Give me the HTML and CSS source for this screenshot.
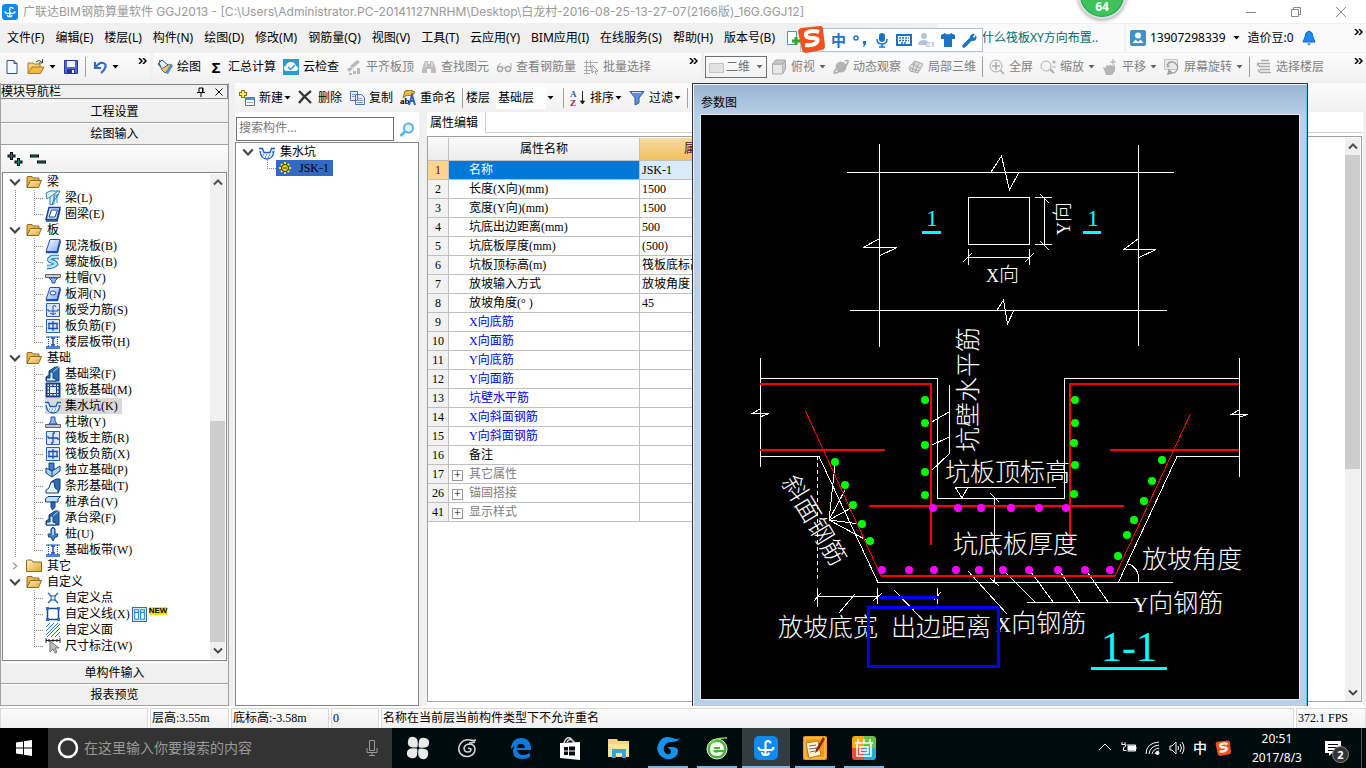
FILE: index.html
```html
<!DOCTYPE html>
<html lang="zh-CN">
<head>
  <meta charset="UTF-8" />
  <meta name="viewport" content="width=device-width, initial-scale=1.0" />
  <title>广联达BIM钢筋算量软件 GGJ2013</title>
  <link rel="stylesheet" href="styles.css">
</head>
<body>
  <svg class="defs" aria-hidden="true">
    <defs>
      <linearGradient id="gold" x1="0" y1="0" x2="1" y2="1"><stop offset="0" stop-color="#fff3c0"/><stop offset="1" stop-color="#dfa52c"/></linearGradient>
      <linearGradient id="sky" x1="0" y1="0" x2="1" y2="1"><stop offset="0" stop-color="#fff"/><stop offset="1" stop-color="#7fa8ee"/></linearGradient>
      <symbol id="logo" viewBox="0 0 24 24"><rect width="24" height="24" rx="5" fill="#0d8bf2"/><path d="M11.500 19V7.500q0-2.500 2.500-2.500t2.500 2.500M4.500 11q0 3 3 3h9q3 0 3-3M8 16q0 3 3.500 3t3.500-2.500" fill="none" stroke="#fff" stroke-width="2"/></symbol>
      <symbol id="down" viewBox="0 0 7 4"><path d="M0.500 0h6L3.500 3.500z" fill="currentColor"/></symbol>
      <symbol id="more" viewBox="0 0 9 6"><path d="M1 0l3 3-3 3M5 0l3 3-3 3" fill="none" stroke="#000" stroke-width="1.500"/></symbol>
      <symbol id="open" viewBox="0 0 10 6"><path d="M1 1l4 4 4-4" fill="none" stroke="#444" stroke-width="1.800"/></symbol>
      <symbol id="closed" viewBox="0 0 6 10"><path d="M1 1l4 4-4 4" fill="none" stroke="#a0a0a0" stroke-width="1.800"/></symbol>
      <symbol id="up" viewBox="0 0 10 6"><path d="M1 5l4-4 4 4" fill="none" stroke="#505050" stroke-width="2"/></symbol>

      <symbol id="new" viewBox="0 0 16 16"><path d="M3 1.500h7l3 3v10H3z" fill="#f4f8ff" stroke="#36506e"/><path d="M10 1.500v3h3" fill="none" stroke="#36506e"/></symbol>
      <symbol id="openfile" viewBox="0 0 18 16"><path d="M1 14V4h5l1 1h6v3" fill="#f5d27a" stroke="#a77b20"/><path d="M1 14.500L5 8h12l-3.500 6.500z" fill="#f0b94a" stroke="#a77b20"/><path d="M9 3q3-3 6 0M15.500 0v4h-4" fill="none" stroke="#444"/></symbol>
      <symbol id="save" viewBox="0 0 16 16"><path d="M1.500 1.500h13v13h-13z" fill="#5367d3" stroke="#27369a"/><path d="M4 2h8v6H4z" fill="#eef2ff"/><path d="M4 10h8v4H4z" fill="#273596"/><path d="M9 11h2v3H9z" fill="#fff"/></symbol>
      <symbol id="undo" viewBox="0 0 16 16"><path d="M3 3v6h6M4 8q3-5 7-4t2 5q-1 3-4 5" fill="none" stroke="#2f6bc9" stroke-width="2.200"/></symbol>
      <symbol id="draw" viewBox="0 0 16 16"><path d="M1 5l4-4 6 5-5 5z" fill="#e3edf8" stroke="#35506f"/><path d="M3 1q-2 4 1 7" stroke="#35506f" fill="none"/><path d="M4 10l4 4 7-6-2-3z" fill="#f3c94d" stroke="#6a6a6a"/><path d="M8 14l6-9 2 1-5 9z" fill="#4a8ae0"/></symbol>
      <symbol id="cloud" viewBox="0 0 16 16"><path d="M0 0h16v16H0z" fill="#2a9bd8"/><path d="M4 12q-3 0-3-3 0-2 2-2.500Q4 3 8 3t5 4q2 0 2 2.500T12.500 12z" fill="#fff"/><path d="M5 8l2.500 2.500L12 6" fill="none" stroke="#2a9bd8" stroke-width="1.500"/></symbol>
      <symbol id="align" viewBox="0 0 16 16"><path d="M4 7l7-6 3 2-7 6zM1 10l4-2 2 2-4 3zM3 14h3v2H3zM7 12h3v3H7zM11 9h3v6h-3z" fill="#b9b9b9"/></symbol>
      <symbol id="find" viewBox="0 0 16 16"><path d="M4 2h3v3h2V2h3l3 8v4h-5v-4H6v4H1v-4z" fill="#bdbdbd"/><path d="M5 3v5M11 3v5" stroke="#eee"/></symbol>
      <symbol id="glasses" viewBox="0 0 16 16"><path d="M5 4Q1 6 1.500 10M15 4v6" fill="none" stroke="#aaa"/><circle cx="4" cy="10" r="2.500" fill="none" stroke="#aaa" stroke-width="1.500"/><circle cx="12" cy="10" r="2.500" fill="none" stroke="#aaa" stroke-width="1.500"/><path d="M6 9h3" stroke="#aaa"/></symbol>
      <symbol id="batch" viewBox="0 0 16 16"><path d="M1 3.500h14M1 7.500h8M1 11.500h8M1 14.500h6M3.500 1v14M7.500 1v8" stroke="#aaa" fill="none"/><path d="M9 6l6 6-3 .5 1.500 3M9 6v8l2-2" stroke="#999" fill="#eee"/></symbol>
      <symbol id="plane" viewBox="0 0 16 16"><path d="M.5 4.500h14v9H.5z" fill="#e2e2e2" stroke="#c5c5c5"/></symbol>
      <symbol id="cube" viewBox="0 0 16 16"><path d="M1.500 5h10v10h-10z" fill="#e8e8e8" stroke="#aaa"/><path d="M1.500 5l3-4h10l-3 4zM11.500 5l3-4v9l-3 5" fill="#c9c9c9" stroke="#aaa"/></symbol>
      <symbol id="orbit" viewBox="0 0 16 16"><circle cx="8" cy="8" r="5.500" fill="#b5b5b5"/><path d="M3 10Q-1 15 3 14 12 10 14 5q3-5-2-3" fill="none" stroke="#aaa" stroke-width="1.500"/></symbol>
      <symbol id="part" viewBox="0 0 16 16"><path d="M1 8l6-6 8 3-5 9-8-2z" fill="#ddd" stroke="#aaa"/><path d="M4 5l8 4M7 3L4 12M11 4L7 13M2 9l9 3" stroke="#aaa"/></symbol>
      <symbol id="full" viewBox="0 0 16 16"><circle cx="7" cy="7" r="6" fill="#f4f4f4" stroke="#aaa"/><path d="M7 3v8M3 7h8M11 11l4 4" stroke="#aaa" stroke-width="1.500"/></symbol>
      <symbol id="zoom" viewBox="0 0 16 16"><circle cx="6" cy="7" r="5" fill="#f4f4f4" stroke="#b0b0b0"/><path d="M10 10l4 4" stroke="#aaa" stroke-width="2"/><path d="M12 3h4M14 1v4M12 8h4" stroke="#aaa"/></symbol>
      <symbol id="pan" viewBox="0 0 16 16"><path d="M1 8l3 1V6l2 1 2-1 2 1 3-1v6l-3 4H4z" fill="#b5b5b5"/><path d="M11 0v6M8 3h6" stroke="#aaa"/></symbol>
      <symbol id="rotate" viewBox="0 0 16 16"><path d="M.5.500h13v10H.5z" fill="#e9e9e9" stroke="#c4c4c4"/><path d="M3 6q3-5 8-2 4 3 2 7t-8 3M4 15l1-4 3 3z" fill="none" stroke="#999" stroke-width="1.300"/><circle cx="4" cy="7" r="1.500" fill="#aaa"/></symbol>
      <symbol id="floors" viewBox="0 0 16 16"><path d="M5 1.500h8M1 4.500h13M4 7.500h10M1 5l3 3M4 10.500h10M4 13.500h11M2 10.500l2 3" fill="none" stroke="#aaa" stroke-width="1.500"/></symbol>

      <symbol id="add" viewBox="0 0 16 16"><path d="M4 0v8M0 4h8" stroke="#8b7500" stroke-width="4"/><path d="M4 1v6M1 4h6" stroke="#ffe66b" stroke-width="2"/><path d="M6.500 7.500h9v8h-9z" fill="#fff" stroke="#4a78bf"/><path d="M7 8h8v2H7z" fill="#5b8edb"/><path d="M8 12.500h6" stroke="#9ab"/></symbol>
      <symbol id="del" viewBox="0 0 16 16"><path d="M1 1q6 6 12 12M13 1Q6 6 1 13" fill="none" stroke="#333" stroke-width="2.200"/></symbol>
      <symbol id="copy" viewBox="0 0 16 16"><path d="M1.500 1.500h7v9h-7zM6.500 4.500h6l3 3v7h-9z" fill="#e8f0fc" stroke="#4773b7"/><path d="M8 8.500h5M8 10.500h6M8 12.500h6M3 4.500h4M3 6.500h3" stroke="#7b9bd0"/></symbol>
      <symbol id="rename" viewBox="0 0 16 16"><path d="M5 1l5-1 5 2-3 4-5-1-4 3z" fill="#f0bd36" stroke="#8d6c1c"/><text x="0" y="14" class="icon-ab">ab</text><path d="M9 15l3-10 3 10M10 11h4" fill="none" stroke="#2f63b8" stroke-width="2"/></symbol>
      <symbol id="sort" viewBox="0 0 16 16"><text x="0" y="7" class="icon-a">A</text><text x="0" y="16" class="icon-z">Z</text><path d="M12.500 1v13M10.500 11l2 3 2-3z" stroke="#222" fill="#222"/></symbol>
      <symbol id="filter" viewBox="0 0 16 16"><path d="M1 1.500h14L10 8v5l-4 2V8z" fill="#5d91dc" stroke="#2e5fae"/><path d="M3 2.500h9" stroke="#cfe0fa"/></symbol>
      <symbol id="search" viewBox="0 0 16 16"><circle cx="9.500" cy="6" r="4.500" fill="#e6f5fd" stroke="#5cb2e6" stroke-width="2"/><path d="M6 9.500L1.500 14" stroke="#5cb2e6" stroke-width="3"/></symbol>

      <symbol id="folder" viewBox="0 0 16 16"><path d="M1 13.500V3.500q0-1 1-1h4l1.500 1.500H13v3" fill="#e9b64c" stroke="#8d6a1d"/><path d="M1 13.500L4.500 6.500h11l-3 7z" fill="url(#gold)" stroke="#8d6a1d"/></symbol>
      <symbol id="folder-shut" viewBox="0 0 16 16"><path d="M.5 13.500V3q0-1 1-1h4L7 4h8.500v9.500z" fill="url(#gold)" stroke="#8d6a1d"/></symbol>
      <symbol id="beam" viewBox="0 0 16 16"><path d="M1 3l4-2h10l-2 4H9v9l-4 1V7L2 9z" fill="#d9f2fb" stroke="#2a7ec4"/><path d="M5 7l8-6M7 15l3-9M9 11l4-6M12 5v8" stroke="#2a7ec4"/></symbol>
      <symbol id="ring" viewBox="0 0 16 16"><path d="M4 1.500h11L12 13.500H1z" fill="#dce8ff" stroke="#16429a" stroke-width="1.500"/><path d="M6.500 4h6L10 11H4z" fill="#fff" stroke="#16429a"/><path d="M1 15h11l3-12" fill="none" stroke="#16429a" stroke-width="1.500"/></symbol>
      <symbol id="slab" viewBox="0 0 16 16"><path d="M5 1.500h10L12 13.500H1z" fill="url(#sky)" stroke="#1c4fb4"/><path d="M1 14.500h11.500l3-12" fill="none" stroke="#1c4fb4" stroke-width="1.500"/></symbol>
      <symbol id="spiral" viewBox="0 0 16 16"><path d="M14 3H7Q2 6 6 7t5 3q-2 3-9 3" fill="none" stroke="#1c78c4" stroke-width="4.500"/><path d="M14 3H7Q2 6 6 7t5 3q-2 3-9 3" fill="none" stroke="#b9e6fb" stroke-width="2.500"/></symbol>
      <symbol id="cap" viewBox="0 0 16 16"><path d="M.5 4.500h15v3H.5z" fill="#ccc" stroke="#666"/><path d="M4 8l3 3v2h3v-2l3-3z" fill="#8dbcf4" stroke="#1c4fa4"/></symbol>
      <symbol id="hole" viewBox="0 0 16 16"><path d="M5 1.500h10L12 13.500H1z" fill="url(#sky)" stroke="#1c4fb4"/><path d="M1 14.500h11.500l3-12" fill="none" stroke="#1c4fb4" stroke-width="1.500"/><ellipse cx="8" cy="7" rx="3" ry="2" fill="#fff" stroke="#1c4fb4"/></symbol>
      <symbol id="bars" viewBox="0 0 16 16"><path d="M1.500 1.500h13v13h-13z" fill="#dbe9ff" stroke="#2a5fc0"/><path d="M8 13V4q2-2 3 1M3 7v2h10V7M5 11q3 3 6 0" fill="none" stroke="#1d4fb0"/></symbol>
      <symbol id="neg" viewBox="0 0 16 16"><path d="M1.500 1.500h13v13h-13z" fill="#dbe9ff" stroke="#2a5fc0"/><path d="M8 3v10M3 5.500h10M4 5v5M12 5v5M3 10.500h10" stroke="#1d4fb0" stroke-width="1.300"/></symbol>
      <symbol id="strip" viewBox="0 0 16 16"><path d="M1 12h14v3H1z" fill="#4a83d6"/><path d="M1 3h14" stroke="#1d4fb0"/><path d="M3.500 3v9M12.500 3v9" stroke="#1d4fb0" stroke-dasharray="1 1"/><path d="M6 4h4M8 4v8M6 11h4" stroke="#1d4fb0" stroke-width="1.500"/></symbol>
      <symbol id="fbeam" viewBox="0 0 16 16"><path d="M1 15v-4l3-2V5l6-4h4v14z" fill="#2c6cb4" stroke="#123e78"/><path d="M1.500 15v-3H5V6h3v6l3 1v2z" fill="#d8ecff" stroke="#123e78"/><path d="M8 6l6-5" stroke="#9fd0ff"/></symbol>
      <symbol id="raft" viewBox="0 0 16 16"><path d="M1.500 1.500h13v13h-13z" fill="#e8f1ff" stroke="#123e88" stroke-width="2"/><path d="M4.500 4.500h7v7h-7z" fill="none" stroke="#123e88"/><path d="M4.500 1v3M8 1v3M11.500 1v3M4.500 12v3M8 12v3M11.500 12v3M1 4.500h3M1 8h3M1 11.500h3M12 4.500h3M12 8h3M12 11.500h3" stroke="#123e88"/></symbol>
      <symbol id="pit" viewBox="0 0 16 16"><path d="M0 3.500h4l1 5h6l1-5h4q-1 9-4 11H5Q1 12 0 6z" fill="#e1f0ff"/><path d="M0 4.500h3.500L5 8.500h6l1.500-4H16M1 7q1 8 7 8t7-8" fill="none" stroke="#1e5fbc" stroke-width="1.300"/><path d="M4 11h1M7 11h1M10 11h1M6 13h1M9 13h1M13 8h1" stroke="#1e5fbc"/></symbol>
      <symbol id="pier" viewBox="0 0 16 16"><path d="M.5 10.500h15v3H.5z" fill="#c4c4c4" stroke="#666"/><path d="M4 10l2-3V3h4v4l2 3z" fill="#8dbcf4" stroke="#1c4fa4"/></symbol>
      <symbol id="cross" viewBox="0 0 16 16"><path d="M1.500 1.500h13v13h-13z" fill="#dbe9ff" stroke="#2a5fc0"/><path d="M8 3v10M3 8h10M10 3H8M6 13h2M3 6v2M13 10V8" stroke="#1d4fb0" stroke-width="1.300"/></symbol>
      <symbol id="single" viewBox="0 0 16 16"><path d="M1 6l6 3 8-5v5l-8 6-6-4z" fill="#a9d2fb" stroke="#123e78"/><path d="M4 1h5v6L7 9 4 7z" fill="#3d84cc" stroke="#123e78"/><path d="M7 9v6" stroke="#123e78"/></symbol>
      <symbol id="stripf" viewBox="0 0 16 16"><path d="M6 4l5-3h4v10l-2 4z" fill="#2c6cb4" stroke="#123e78"/><path d="M1 15v-3l3-2 2-6h3l1 6 3 2v3z" fill="#e4f2ff" stroke="#123e78"/></symbol>
      <symbol id="pilecap" viewBox="0 0 16 16"><path d="M.5 5L3 2.500h12.500L13 5v3H.5z" fill="#bfe0ff" stroke="#123e78"/><path d="M6 8v5l1.500 3L10 13V8z" fill="#2c6cb4" stroke="#123e78"/></symbol>
      <symbol id="pile" viewBox="0 0 16 16"><path d="M6 3l2-2 2 2v5h3l-1 3H10l-2 4-2-4H3.500L3 8h3z" fill="#3f84cf" stroke="#123e78"/><path d="M8 3v6" stroke="#d8ecff" stroke-width="1.500"/></symbol>
      <symbol id="point" viewBox="0 0 16 16"><path d="M3 3l10 10M13 3L3 13" stroke="#1e5fbc" stroke-width="1.300"/><path d="M6 6h4v4H6z" fill="#dff" stroke="#1e5fbc"/></symbol>
      <symbol id="poly" viewBox="0 0 16 16"><path d="M2.500 2.500h11v11h-11z" fill="#fff" stroke="#1546a0" stroke-width="1.500"/><path d="M1 1h3v3H1zM12 1h3v3h-3zM1 12h3v3H1zM12 12h3v3h-3z" fill="#2c6fd0"/></symbol>
      <symbol id="hatch" viewBox="0 0 16 16"><path d="M1 5l4-4M1 9l8-8M1 13L13 1M2 15L15 2M6 15l9-9M10 15l5-5M14 15l1-1" stroke="#2c6fd0"/></symbol>
      <symbol id="dim" viewBox="0 0 16 16"><path d="M1 0v5M15 0v5M1 2.500h14M4 1v3M8 1v3M12 1v3" stroke="#222"/><path d="M5 3v11l3-3 2 4 2-1-2-4h4z" fill="#bbb" stroke="#777"/></symbol>
      <symbol id="sun" viewBox="0 0 16 16"><path d="M8 2v12M2 8h12M4 4l8 8M12 4l-8 8" stroke="#ffe600" stroke-width="2"/><circle cx="8" cy="8" r="3.500" fill="#ffe600" stroke="#222"/><path d="M6 8h4" stroke="#222"/></symbol>
      <symbol id="sogou" viewBox="0 0 28 28"><path d="M4 3l19-2q3 0 3 3l2 17q0 3-3 4L9 28q-3 0-4-3L1 7q0-3 3-4z" fill="#f4511e"/><path d="M22 7q-6-2-11 0-4 2-1 5 2 1 6 1 6 0 4 4-3 4-12 3" fill="none" stroke="#fff" stroke-width="4"/></symbol>
    </defs>
  </svg>

  <header class="titlebar">
    <svg class="app-logo"><use href="#logo"/></svg>
    <h1>广联达BIM钢筋算量软件 GGJ2013 - [C:\Users\Administrator.PC-20141127NRHM\Desktop\白龙村-2016-08-25-13-27-07(2166版)_16G.GGJ12]</h1>
    <div class="ball">64</div>
    <div class="window-buttons">
      <button aria-label="最小化"><svg viewBox="0 0 12 12"><path d="M1 6.500h10"/></svg></button>
      <button aria-label="还原"><svg viewBox="0 0 12 12"><path d="M1.500 3.500h7v7h-7zM3.500 3V1.500h7v7H9"/></svg></button>
      <button aria-label="关闭"><svg viewBox="0 0 12 12"><path d="M1 1l10 10M11 1L1 11"/></svg></button>
    </div>
  </header>

  <div class="menubar">
    <nav class="menus">
      <button>文件(F)</button><button>编辑(E)</button><button>楼层(L)</button><button>构件(N)</button><button>绘图(D)</button><button>修改(M)</button><button>钢筋量(Q)</button><button>视图(V)</button><button>工具(T)</button><button>云应用(Y)</button><button>BIM应用(I)</button><button>在线服务(S)</button><button>帮助(H)</button><button>版本号(B)</button>
      <svg class="icon" viewBox="0 0 16 16"><path d="M1.500 1.500h9v13h-9z" fill="#fff" stroke="#3f9bc9"/><path d="M6 11h8M10 7v8" stroke="#33a52b" stroke-width="3"/></svg>
    </nav>
    <a class="tip" href="#">什么筏板XY方向布置..</a>
    <div class="account">
      <svg class="user" viewBox="0 0 16 16"><rect width="16" height="16" rx="2" fill="#3d93c7"/><circle cx="8" cy="5.500" r="3" fill="#fff"/><path d="M2.500 13l3-3.500L8 12l2.500-2.500 3 3.500z" fill="#fff"/></svg>
      <button>13907298339<svg class="down"><use href="#down"/></svg></button>
      <span>造价豆:0</span>
      <svg class="bell" viewBox="0 0 14 16"><path d="M7 1q4 1 4 6l2 5H1l2-5q0-5 4-6z" fill="#1e88f0" stroke="#1565c0"/><path d="M5 13.500h4l-2 2z" fill="#1565c0"/></svg>
      <svg class="more"><use href="#more"/></svg>
    </div>
    <div class="ime">
      <svg class="ime-logo"><use href="#sogou"/></svg>
      <b>中</b>
      <svg viewBox="0 0 16 16"><circle cx="4" cy="6" r="2" fill="none" stroke="#1b73c8" stroke-width="1.500"/><path d="M11 9h3v3l-2 3h-1l1-3h-1z" fill="#1b73c8"/></svg>
      <svg viewBox="0 0 16 16"><rect x="5" y="1" width="6" height="9" rx="3" fill="#1b73c8"/><path d="M3 7q0 5 5 5t5-5M8 12v3M5 15h6" fill="none" stroke="#1b73c8" stroke-width="1.500"/></svg>
      <svg viewBox="0 0 16 16"><path d="M1 3h14v10H1z" fill="none" stroke="#1b73c8" stroke-width="2"/><path d="M3 6h10M3 8.500h10M5 11h6" stroke="#1b73c8" stroke-width="1.500" stroke-dasharray="2 1"/></svg>
      <svg viewBox="0 0 16 16"><circle cx="6" cy="4" r="3" fill="#b4c3d8"/><path d="M0 13q0-5 6-5 3 0 4 2v3z" fill="#b4c3d8"/><path d="M8 10h8v5H8z" fill="#c3cddc"/><path d="M10 11v3M12 11h2M12 11v3h2v-1.500h-2" stroke="#fff" fill="none"/></svg>
      <svg viewBox="0 0 16 16"><path d="M1 3l4-2q3 3 6 0l4 2v4h-3v8H4V7H1z" fill="#1b73c8"/></svg>
      <svg viewBox="0 0 16 16"><path d="M2 14l7-7" stroke="#1b73c8" stroke-width="3.500" stroke-linecap="round"/><path d="M14 3q2 6-4 6-4-3-1-6 2-2 4-1l-2 3 1 1z" fill="#1b73c8"/></svg>
    </div>
  </div>

  <div class="toolbar">
    <div class="group files">
      <button aria-label="新建工程"><svg class="icon"><use href="#new"/></svg></button>
      <button aria-label="打开"><svg class="icon wide"><use href="#openfile"/></svg><svg class="down"><use href="#down"/></svg></button>
      <button aria-label="保存"><svg class="icon"><use href="#save"/></svg></button>
      <i class="sep"></i>
      <button aria-label="撤销"><svg class="icon"><use href="#undo"/></svg><svg class="down"><use href="#down"/></svg></button>
      <svg class="more"><use href="#more"/></svg>
    </div>
    <div class="group edit">
      <button><svg class="icon"><use href="#draw"/></svg>绘图</button>
      <button><b class="icon sigma">Σ</b>汇总计算</button>
      <button><svg class="icon"><use href="#cloud"/></svg>云检查</button>
      <button class="off"><svg class="icon"><use href="#align"/></svg>平齐板顶</button>
      <button class="off"><svg class="icon"><use href="#find"/></svg>查找图元</button>
      <button class="off"><svg class="icon"><use href="#glasses"/></svg>查看钢筋量</button>
      <button class="off"><svg class="icon"><use href="#batch"/></svg>批量选择</button>
      <svg class="more"><use href="#more"/></svg>
    </div>
    <div class="group view">
      <label class="mode"><svg class="icon"><use href="#plane"/></svg><select aria-label="视图模式"><option>二维</option></select><svg class="down"><use href="#down"/></svg></label>
      <button class="off"><svg class="icon"><use href="#cube"/></svg>俯视<svg class="down"><use href="#down"/></svg></button>
      <button class="off"><svg class="icon"><use href="#orbit"/></svg>动态观察</button>
      <button class="off"><svg class="icon"><use href="#part"/></svg>局部三维</button>
      <i class="sep"></i>
      <button class="off"><svg class="icon"><use href="#full"/></svg>全屏</button>
      <button class="off"><svg class="icon"><use href="#zoom"/></svg>缩放<svg class="down"><use href="#down"/></svg></button>
      <button class="off"><svg class="icon"><use href="#pan"/></svg>平移<svg class="down"><use href="#down"/></svg></button>
      <button class="off"><svg class="icon"><use href="#rotate"/></svg>屏幕旋转<svg class="down"><use href="#down"/></svg></button>
      <i class="sep"></i>
      <button class="off"><svg class="icon"><use href="#floors"/></svg>选择楼层</button>
      <svg class="more"><use href="#more"/></svg>
    </div>
  </div>

  <main class="workspace">
    <aside class="nav">
      <div class="nav-title">
        <h2>模块导航栏</h2>
        <button aria-label="固定"><svg viewBox="0 0 10 10"><path d="M3 5.500V1h4v4.500M6.500 1v4M1 5.500h8M5 6v4"/></svg></button>
        <button aria-label="关闭"><svg viewBox="0 0 10 10"><path d="M1.500 1.500l7 7M8.500 1.500l-7 7"/></svg></button>
      </div>
      <button class="bar">工程设置</button>
      <button class="bar">绘图输入</button>
      <div class="expand">
        <button aria-label="全部展开"><svg viewBox="0 0 18 16"><path d="M4.500 1v8M.5 5h8M11.500 7v8M7.500 11h8" stroke="#000" stroke-width="3"/><path d="M4.500 2v6M1.500 5h6M11.500 8v6M8.500 11h6" stroke="#0a8f86"/></svg></button>
        <button aria-label="全部折叠"><svg viewBox="0 0 18 16"><path d="M0 5h9M7 11h9" stroke="#000" stroke-width="3"/><path d="M1 5h7M8 11h7" stroke="#0a8f86"/></svg></button>
      </div>
      <div class="tree-box">
        <ul class="tree">
          <li><div class="node"><svg class="open"><use href="#open"/></svg><svg class="icon"><use href="#folder"/></svg>梁</div>
            <ul>
              <li><svg class="icon"><use href="#beam"/></svg>梁(L)</li>
              <li><svg class="icon"><use href="#ring"/></svg>圈梁(E)</li>
            </ul>
          </li>
          <li><div class="node"><svg class="open"><use href="#open"/></svg><svg class="icon"><use href="#folder"/></svg>板</div>
            <ul>
              <li><svg class="icon"><use href="#slab"/></svg>现浇板(B)</li>
              <li><svg class="icon"><use href="#spiral"/></svg>螺旋板(B)</li>
              <li><svg class="icon"><use href="#cap"/></svg>柱帽(V)</li>
              <li><svg class="icon"><use href="#hole"/></svg>板洞(N)</li>
              <li><svg class="icon"><use href="#bars"/></svg>板受力筋(S)</li>
              <li><svg class="icon"><use href="#neg"/></svg>板负筋(F)</li>
              <li><svg class="icon"><use href="#strip"/></svg>楼层板带(H)</li>
            </ul>
          </li>
          <li><div class="node"><svg class="open"><use href="#open"/></svg><svg class="icon"><use href="#folder"/></svg>基础</div>
            <ul>
              <li><svg class="icon"><use href="#fbeam"/></svg>基础梁(F)</li>
              <li><svg class="icon"><use href="#raft"/></svg>筏板基础(M)</li>
              <li><span class="current"><svg class="icon"><use href="#pit"/></svg>集水坑(K)</span></li>
              <li><svg class="icon"><use href="#pier"/></svg>柱墩(Y)</li>
              <li><svg class="icon"><use href="#cross"/></svg>筏板主筋(R)</li>
              <li><svg class="icon"><use href="#neg"/></svg>筏板负筋(X)</li>
              <li><svg class="icon"><use href="#single"/></svg>独立基础(P)</li>
              <li><svg class="icon"><use href="#stripf"/></svg>条形基础(T)</li>
              <li><svg class="icon"><use href="#pilecap"/></svg>桩承台(V)</li>
              <li><svg class="icon"><use href="#fbeam"/></svg>承台梁(F)</li>
              <li><svg class="icon"><use href="#pile"/></svg>桩(U)</li>
              <li><svg class="icon"><use href="#strip"/></svg>基础板带(W)</li>
            </ul>
          </li>
          <li><div class="node"><svg class="open"><use href="#closed"/></svg><svg class="icon"><use href="#folder-shut"/></svg>其它</div></li>
          <li><div class="node"><svg class="open"><use href="#open"/></svg><svg class="icon"><use href="#folder"/></svg>自定义</div>
            <ul>
              <li><svg class="icon"><use href="#point"/></svg>自定义点</li>
              <li><svg class="icon"><use href="#poly"/></svg>自定义线(X)<svg class="fresh" viewBox="0 0 14 14"><path d="M.5.500h13v13H.5z" fill="#d5ebfb" stroke="#3b6d95"/><path d="M2.500 2.500h3.500v9H2.500zM8 2.500h3.500v9H8zM2.500 5H6M8 5h3.500" fill="#fff" stroke="#1e88d8"/></svg><em class="new-tag">NEW</em></li>
              <li><svg class="icon"><use href="#hatch"/></svg>自定义面</li>
              <li><svg class="icon"><use href="#dim"/></svg>尺寸标注(W)</li>
            </ul>
          </li>
        </ul>
        <div class="scroll">
          <svg><use href="#up"/></svg><i class="nav-space"></i><i class="thumb"></i><svg><use href="#open"/></svg>
        </div>
      </div>
      <button class="bar">单构件输入</button>
      <button class="bar">报表预览</button>
    </aside>

    <section class="content">
      <div class="subbar">
        <button><svg class="icon"><use href="#add"/></svg>新建<svg class="down"><use href="#down"/></svg></button>
        <button><svg class="icon"><use href="#del"/></svg>删除</button>
        <button><svg class="icon"><use href="#copy"/></svg>复制</button>
        <button><svg class="icon"><use href="#rename"/></svg>重命名</button>
        <i class="sep"></i>
        <label class="floor">楼层<select><option>基础层</option></select><svg class="down"><use href="#down"/></svg></label>
        <i class="sep"></i>
        <button><svg class="icon"><use href="#sort"/></svg>排序<svg class="down"><use href="#down"/></svg></button>
        <button><svg class="icon"><use href="#filter"/></svg>过滤<svg class="down"><use href="#down"/></svg></button>
        <i class="sep"></i>
      </div>
      <div class="panes">
        <div class="components">
          <div class="find">
            <input type="text" placeholder="搜索构件..." aria-label="搜索构件">
            <button aria-label="搜索"><svg class="icon"><use href="#search"/></svg></button>
          </div>
          <ul class="component-tree">
            <li class="node"><svg class="open"><use href="#open"/></svg><svg class="icon"><use href="#pit"/></svg>集水坑</li>
            <li class="leaf"><span class="picked"><svg class="icon"><use href="#sun"/></svg>JSK-1</span></li>
          </ul>
        </div>
        <div class="properties">
          <div class="tabs"><button class="tab">属性编辑</button></div>
          <div class="sheet">
            <table>
              <thead><tr><th></th><th>属性名称</th><th class="hot">属性值</th></tr></thead>
              <tbody>
                <tr class="selected"><th>1</th><td>名称</td><td>JSK-1</td></tr>
                <tr><th>2</th><td>长度(X向)(mm)</td><td>1500</td></tr>
                <tr><th>3</th><td>宽度(Y向)(mm)</td><td>1500</td></tr>
                <tr><th>4</th><td>坑底出边距离(mm)</td><td>500</td></tr>
                <tr><th>5</th><td>坑底板厚度(mm)</td><td>(500)</td></tr>
                <tr><th>6</th><td>坑板顶标高(m)</td><td>筏板底标高</td></tr>
                <tr><th>7</th><td>放坡输入方式</td><td>放坡角度</td></tr>
                <tr><th>8</th><td>放坡角度(° )</td><td>45</td></tr>
                <tr class="rebar"><th>9</th><td>X向底筋</td><td></td></tr>
                <tr class="rebar"><th>10</th><td>X向面筋</td><td></td></tr>
                <tr class="rebar"><th>11</th><td>Y向底筋</td><td></td></tr>
                <tr class="rebar"><th>12</th><td>Y向面筋</td><td></td></tr>
                <tr class="rebar"><th>13</th><td>坑壁水平筋</td><td></td></tr>
                <tr class="rebar"><th>14</th><td>X向斜面钢筋</td><td></td></tr>
                <tr class="rebar"><th>15</th><td>Y向斜面钢筋</td><td></td></tr>
                <tr><th>16</th><td>备注</td><td></td></tr>
                <tr class="fold"><th>17</th><td><button aria-label="展开其它属性">+</button>其它属性</td><td></td></tr>
                <tr class="fold"><th>26</th><td><button aria-label="展开锚固搭接">+</button>锚固搭接</td><td></td></tr>
                <tr class="fold"><th>41</th><td><button aria-label="展开显示样式">+</button>显示样式</td><td></td></tr>
              </tbody>
            </table>
            <div class="scroll">
              <svg><use href="#up"/></svg><i class="thumb tall"></i><i class="rest"></i><svg><use href="#open"/></svg>
            </div>
          </div>
        </div>
      </div>
    </section>

    <section class="dialog">
      <h2>参数图</h2>
      <svg class="drawing" viewBox="701 115 598 584">
        <!-- plan -->
        <g class="line">
          <path d="M879.500 144V347M1138.500 145V346M847 172.500H1174M850 310.500H1167"/>
          <path d="M991 172L1001.500 156 1009.500 190 1019 172M997 310L1003.500 300 1007.500 324 1014 310"/>
          <path d="M879 239L863 247.500H897L879 256M1138 239L1124 249.500H1156L1138 258"/>
          <path d="M968.500 197.500H1029.500V244.500H968.500z"/>
          <path d="M1044.500 197V244M1035 197.500H1052M1035 244.500H1052M1040 194L1049 203M1040 241L1049 250"/>
          <path d="M968 257.500H1029M968.500 249V265M1029.500 249V265M963 262L972 253M1025 262L1034 253"/>
        </g>
        <path class="mark" d="M922 232.500H941M1083 232.500H1101M1091 668.500H1167"/>
        <text class="cyan" x="926" y="226">1</text>
        <text class="cyan" x="1087" y="226">1</text>
        <text class="small" x="986" y="282"><tspan>X</tspan>向</text>
        <text class="small" transform="translate(1070 235) rotate(-90)"><tspan>Y</tspan>向</text>

        <!-- section 1-1 -->
        <g class="line">
          <path d="M760.500 358V467M1239.500 358V477"/>
          <path d="M760 409L752 413.500H769L760 417M1239 410L1231 414.500H1248L1239 417"/>
          <path d="M760 378.500H937.500V498.500H1064.500V378.500H1239"/>
          <path d="M760 456.500H819L878 582.500H1173M1239 456.500H1177L1118.500 582"/>
          <path d="M817.500 456V580" stroke-dasharray="4 3"/>
          <path d="M949.500 385V454M949 412L930 423M949 437L930 446M949 454L930 472"/>
          <path d="M955 487.500H1056M955 487L962 498 968 487"/>
          <path d="M994.500 498V583M990 493L999 502M990 578L999 586"/>
          <path d="M829 520L835 465M829 520L845 490M829 520L853 507M829 520L860 524M829 520L868 541"/>
          <path d="M1128 564Q1139 567 1139 582"/>
          <path d="M1027 602.500H1136M1005 572L1035 602M1031 572L1053 602M1061 573L1080 602M1088 573L1108 602M968 571L1007 614"/>
          <path d="M817 596.500H878M817.500 588V607M877.500 588V604M937.500 588V604M814 601L821 593M873 601L882 593M934 600L941 592M855 594L839 613M894 590L921 618"/>
        </g>
        <path class="steel thin" d="M805.500 411L881 576M1115 576L1190.500 414"/>
        <path class="steel" d="M760 384H931V545M1239 384H1070V545M760 450H885M1110 450H1239M869 506H1124M881 576H1115"/>
        <g class="side">
          <circle cx="925" cy="400" r="4"/><circle cx="925" cy="423" r="4"/><circle cx="925" cy="445" r="4"/><circle cx="925" cy="472" r="4"/><circle cx="925" cy="495" r="4"/>
          <circle cx="1075" cy="400" r="4"/><circle cx="1075" cy="423" r="4"/><circle cx="1074" cy="443" r="4"/><circle cx="1075" cy="465" r="4"/><circle cx="1074" cy="494" r="4"/>
          <circle cx="835" cy="462" r="4"/><circle cx="845" cy="485" r="4"/><circle cx="853" cy="505" r="4"/><circle cx="862" cy="524" r="4"/><circle cx="870" cy="541" r="4"/>
          <circle cx="1162" cy="460" r="4"/><circle cx="1152" cy="481" r="4"/><circle cx="1144" cy="501" r="4"/><circle cx="1134" cy="520" r="4"/><circle cx="1127" cy="535" r="4"/><circle cx="1118" cy="556" r="4"/>
        </g>
        <g class="flat">
          <circle cx="933" cy="508" r="4"/><circle cx="958" cy="508" r="4"/><circle cx="981" cy="508" r="4"/><circle cx="1011" cy="508" r="4"/><circle cx="1039" cy="508" r="4"/><circle cx="1066" cy="508" r="4"/>
          <circle cx="882" cy="570" r="4"/><circle cx="909" cy="570" r="4"/><circle cx="934" cy="570" r="4"/><circle cx="956" cy="570" r="4"/><circle cx="979" cy="570" r="4"/><circle cx="1003" cy="570" r="4"/><circle cx="1029" cy="570" r="4"/><circle cx="1058" cy="570" r="4"/><circle cx="1085" cy="570" r="4"/><circle cx="1110" cy="570" r="4"/>
        </g>
        <text transform="translate(977 452) rotate(-90)">坑壁水平筋</text>
        <text x="945" y="481">坑板顶标高</text>
        <text x="953" y="553">坑底板厚度</text>
        <text transform="translate(781 482) rotate(59)">斜面钢筋</text>
        <text x="1142" y="568">放坡角度</text>
        <text x="1133" y="612"><tspan>Y</tspan>向钢筋</text>
        <text x="996" y="632"><tspan>X</tspan>向钢筋</text>
        <text x="778" y="636">放坡底宽</text>
        <text x="891" y="636">出边距离</text>
        <text class="cyan big" x="1101" y="661">1-1</text>
        <path class="focus" d="M879 597.500H938M868.500 607.500H998.500V666.500H868.500z"/>
      </svg>
    </section>
  </main>

  <footer class="status">
    <span class="s1"></span><span class="s2">层高:3.55m</span><span class="s3">底标高:-3.58m</span><span class="s4">0</span><span class="s5">名称在当前层当前构件类型下不允许重名</span><span class="s6">372.1 FPS</span>
  </footer>

  <div class="taskbar">
    <button class="start" aria-label="开始"><svg viewBox="0 0 16 16"><path d="M0 2.500l7-1v6H0zM8 1.300L16 0v7.500H8zM0 8.500h7v6l-7-1zM8 8.500h8V16l-8-1.300z" fill="#fff"/></svg></button>
    <label class="cortana">
      <svg class="circle" viewBox="0 0 22 22"><circle cx="11" cy="11" r="9" fill="none" stroke="#fff" stroke-width="2.500"/></svg>
      <input type="text" placeholder="在这里输入你要搜索的内容" aria-label="搜索">
      <svg class="mic" viewBox="0 0 12 16"><path d="M3.500.500h5v10h-5zM1 8v4.500h10V8M6 13v3M3 15.500h6" fill="none" stroke="#999"/></svg>
    </label>
    <div class="apps">
      <button aria-label="风扇"><svg viewBox="0 0 24 24"><g fill="#e8eaea"><path d="M11.500 11Q9 12 5 11 1 10 2 5t6-4q5 1 3.500 10z"/><path d="M13 11.500Q12 9 13 5q1-4 6-3t4 6q-1 5-10 3.500z"/><path d="M12.500 13q2.500-1 6.500 0 4 1 3 6t-6 4q-5-1-3.500-10z"/><path d="M11 12.500q1 2.500 0 6.500-1 4-6 3t-4-6q1-5 10-3.500z"/></g></svg></button>
      <button aria-label="浏览器"><svg viewBox="0 0 24 24"><path d="M21 4q-3 1-6 0-6-1-9 3-4 5-1 10 4 5 10 3 5-2 5-7 0-4-5-5-5 0-6 4 0 4 4 4 3 0 3-3l-3-1M20 6q-3 1-6 1" fill="none" stroke="#d3d8d8" stroke-width="1.500"/></svg></button>
      <button class="after" aria-label="Edge"><svg viewBox="0 0 24 24"><path d="M2 11Q4 2 12 2q9 0 10 9v3H8q1 5 6 5 4 0 7-2v4q-3 2-8 2-9 0-9-8 0-5 6-8-2 2-2 5h8q0-4-4-4-5 0-10 5z" fill="#0b7bdb"/></svg></button>
      <button aria-label="应用商店"><svg viewBox="0 0 24 24"><path d="M2 7l20-1v18L2 22z" fill="#fff"/><path d="M6 7q2-6 6-5l5 5M9 6q3-5 7 0" fill="none" stroke="#ddd" stroke-width="1.500"/><path d="M6 11h4v3.500H6zM11 10.500h6v4h-6zM6 15.500h4V19H6zM11 15.500h6v4h-6z" fill="#000b0d"/></svg></button>
      <button aria-label="文件资源管理器"><svg viewBox="0 0 24 24"><path d="M1 3h9l1 2h11v16H1z" fill="#f7d774"/><path d="M1 8h21v12H1z" fill="#fbe49a"/><path d="M5 22v-9h14v9h-4v-5H9v5z" fill="#32a5dd"/></svg></button>
      <button class="run" aria-label="G浏览器"><svg viewBox="0 0 24 24"><path d="M24 2q-3 2-7 0Q8-1 4 5-1 12 3 18q4 6 12 5 7-2 7-8 0-4-6-4h-5q4 2 4 5-1 3-4 2-4-2-3-7 2-5 7-5 7 0 9-4z" fill="#1592ec"/></svg></button>
      <button class="run" aria-label="360浏览器"><svg viewBox="0 0 24 24"><circle cx="12" cy="13" r="10" fill="#49b23c" stroke="#e5f5e1"/><path d="M5 14h14q0-8-7-8t-7 7 7 7q5 0 6-4h-4q-5 2-6-2" fill="#f4fff0"/><path d="M9 11h6v2H9z" fill="#49b23c"/><path d="M3 9Q10 1 22 2" stroke="#7ed957" stroke-width="1.500" fill="none"/></svg></button>
      <button class="run active" aria-label="GGJ2013"><svg><use href="#logo"/></svg></button>
      <button class="run" aria-label="便笺"><svg viewBox="0 0 24 24"><rect width="24" height="24" rx="2" fill="#f29a16"/><path d="M2 2h20v20H2z" fill="none" stroke="#ffd27a"/><path d="M3 7l12-2 3 14-12 3z" fill="#fff6dc" stroke="#c7780c"/><path d="M6 10l7-1M6 13l8-1M7 16l5-1" stroke="#666"/><path d="M20 1l-7 12-1 4 3-2 7-12z" fill="#8b2a10"/></svg></button>
      <button class="run" aria-label="预算"><svg viewBox="0 0 24 24"><path d="M0 3q0-3 3-3h9v12H0z" fill="#f5a623"/><path d="M12 0h9q3 0 3 3v9H12z" fill="#6cc04a"/><path d="M0 12h12v12H3q-3 0-3-3z" fill="#e94e3c"/><path d="M12 12h12v9q0 3-3 3h-9z" fill="#28a8d8"/><path d="M5 8v12h14V8M3 7h18M6 3v4M12 3v4M18 3v4M8 11h8v6H8zM8 14h8" fill="none" stroke="#fff" stroke-width="1.500"/></svg></button>
    </div>
    <div class="tray">
      <svg viewBox="0 0 16 16"><path d="M2 10l6-6 6 6" /></svg>
      <svg viewBox="0 0 16 16"><path d="M5.500 5h9v6h-8M15 7v2"/><path d="M7 6h7v4H7z" fill="#fff"/><path d="M1 2v2M4 2v2M.5 4.500h4v2l-2 1v3h3"/></svg>
      <svg viewBox="0 0 16 16"><path d="M1 14Q1 3 14 2M4 14Q5 6 14 5M7 14q1-5 7-6M10 14q1-3 4-3" /><circle cx="12.500" cy="13" r="1.500" fill="#fff"/></svg>
      <svg viewBox="0 0 16 16"><path d="M1 6h2l4-4v12l-4-4H1zM9 6q1 2 0 4M11 4q3 4 0 8M13 2q4 6 0 12"/></svg>
      <b>中</b>
      <svg><use href="#sogou"/></svg>
      <time>20:51<br>2017/8/3</time>
      <button class="notice" aria-label="通知"><svg viewBox="0 0 16 16"><path d="M0 1h16v12H7l-3 3v-3H0z" fill="#fff" stroke="none"/><path d="M3 4.500h10M3 7.500h10M3 10.500h7" stroke="#000"/></svg><span>2</span></button>
    </div>
  </div>
</body>
</html>
```
FILE: styles.css
```css
* {
  box-sizing: border-box;
}

body {
  margin: 0;
  height: 100vh;
  display: flex;
  flex-direction: column;
  overflow: hidden;
  background: #f0f0f0;
  color: #000;
  font-family: "Noto Sans", "Noto Sans CJK SC", sans-serif;
  font-size: 12px;
  line-height: 16px;
}

button, input, select {
  margin: 0;
  padding: 0;
  border: 0;
  background: none;
  color: inherit;
  font: inherit;
}

h1, h2, ul {
  margin: 0;
  padding: 0;
  font-size: 12px;
  font-weight: 400;
  list-style: none;
}

button {
  display: flex;
  align-items: center;
  white-space: nowrap;
}

svg {
  flex: none;
}

select {
  appearance: none;
}

.defs {
  position: absolute;
  width: 0;
  height: 0;
}

.icon {
  width: 16px;
  height: 16px;
  margin-right: 4px;
}

.down {
  width: 7px;
  height: 4px;
  margin-left: 4px;
}

.more {
  width: 9px;
  height: 6px;
  margin-left: auto;
}

.sep {
  width: 1px;
  height: 20px;
  margin: 0 -1px;
  background: #a0a0a0;
}

.icon-ab, .icon-a, .icon-z {
  font: bold 9px "Liberation Serif", serif;
}

.icon-a {
  fill: #2f5bb0;
}

.icon-z {
  fill: #9c2a3c;
}

/* title bar */
.titlebar {
  display: flex;
  align-items: center;
  height: 23px;
  flex: none;
  padding-left: 2px;
  background: #fff;
  color: #999;
}

.app-logo {
  width: 16px;
  height: 16px;
  margin-right: 5px;
}

.titlebar h1 {
  font-family: Inter, "Noto Sans CJK SC", sans-serif;
  white-space: nowrap;
}

.ball {
  position: absolute;
  top: -29px;
  right: 240px;
  z-index: 3;
  width: 48px;
  height: 48px;
  padding-top: 26px;
  border: 2px solid #ddd;
  border-radius: 50%;
  background: #3cc35a;
  box-shadow: 0 1px 4px rgba(0, 0, 0, .4), inset 0 0 0 1px #1d9a5c;
  color: #fff;
  font-weight: 700;
  text-align: center;
}

.window-buttons {
  display: flex;
  gap: 33px;
  margin-left: auto;
  padding-right: 19px;
}

.window-buttons svg {
  width: 12px;
  height: 12px;
  fill: none;
  stroke: #888;
}

/* menu bar */
.menubar {
  position: relative;
  display: flex;
  height: 30px;
  flex: none;
  align-items: center;
}

.menus {
  display: flex;
  gap: 11px;
  padding-left: 7px;
  flex: 0 0 937px;
}

.tip {
  flex: 0 0 187px;
  padding-left: 45px;
  background: #fafafa;
  color: #006b6b;
  line-height: 28px;
  text-decoration: none;
  white-space: nowrap;
}

.account {
  display: flex;
  flex: 1;
  align-items: center;
  height: 28px;
  margin-left: 2px;
  padding: 0 3px 0 4px;
  background: #fafafa;
}

.user {
  width: 16px;
  height: 16px;
  margin-right: 4px;
}

.account .down {
  margin: 0 8px 0 7px;
}

.bell {
  width: 14px;
  height: 16px;
  margin-left: 8px;
}

.account .more {
  margin-bottom: 12px;
}

.ime {
  position: absolute;
  top: 5px;
  left: 800px;
  display: flex;
  align-items: center;
  gap: 6px;
  width: 183px;
  height: 24px;
  border: 1px solid #a9c3e0;
  background: #fff;
  color: #1b73c8;
}

.ime b {
  font-size: 15px;
}

.ime svg {
  width: 16px;
  height: 16px;
}

.ime .ime-logo {
  width: 28px;
  height: 28px;
  margin: -2px 0 0 -4px;
}

/* toolbars */
.toolbar {
  display: flex;
  gap: 3px;
  height: 30px;
  flex: none;
  padding-bottom: 2px;
}

.group {
  display: flex;
  align-items: center;
  gap: 7px;
  padding: 0 3px 0 4px;
  background: linear-gradient(#fcfcfc, #f1f1f1);
}

.files {
  flex: 0 0 150px;
}

.edit {
  flex: 0 0 548px;
}

.view {
  flex: 1;
  padding: 0 3px 0 1px;
}

.files .icon {
  margin-right: 0;
}

.files .icon.wide {
  width: 18px;
}

.group .more {
  margin-bottom: 12px;
}

.off {
  color: #808080;
}

.off .down {
  color: #606060;
}

.sigma {
  font-size: 15px;
  text-align: center;
}

.mode {
  display: flex;
  align-items: center;
  width: 62px;
  height: 22px;
  margin-right: -3px;
  padding: 0 3px;
  border: 1px solid #707070;
  color: #707070;
}

.mode .icon {
  margin-right: 1px;
}

.mode select {
  flex: 1;
}

.mode .down {
  margin-left: 0;
}

/* workspace */
.workspace {
  position: relative;
  display: flex;
  flex: 1;
  gap: 6px;
  min-height: 0;
}

.nav {
  display: flex;
  flex: 0 0 229px;
  flex-direction: column;
  padding-top: 1px;
  border-right: 1px solid #a0a0a0;
  border-left: 1px solid #a0a0a0;
}

.nav-title {
  display: flex;
  align-items: center;
  height: 15px;
  flex: none;
  gap: 8px;
  margin-bottom: 2px;
  padding-right: 3px;
  border: 1px solid #808080;
  border-left: 0;
}

.nav-title h2 {
  flex: 1;
}

.nav-title svg {
  width: 10px;
  height: 10px;
  fill: none;
  stroke: #000;
}

.bar {
  justify-content: center;
  height: 22px;
  flex: none;
  border-bottom: 1px solid #a0a0a0;
  box-shadow: inset 0 1px #fff;
}

.expand {
  display: flex;
  align-items: center;
  gap: 5px;
  height: 27px;
  flex: none;
  padding-left: 6px;
  background: linear-gradient(#fcfcfc, #f1f1f1);
}

.expand svg {
  width: 18px;
  height: 16px;
}

.tree-box, .component-tree {
  border: 1px solid #828790;
  background: #fff;
  font-family: "Liberation Serif", "Noto Sans CJK SC", serif;
}

.tree-box {
  display: flex;
  flex: 1;
  min-height: 0;
  margin: 0 1px 1px;
  padding: 1px;
}

.tree {
  flex: 1;
  white-space: nowrap;
}

.tree li {
  line-height: 16px;
}

.node, .tree ul li, .current, .picked {
  display: flex;
  align-items: center;
  height: 16px;
}

.node {
  padding-left: 6px;
}

.tree .node {
  padding-left: 5px;
}

.node .open {
  width: 12px;
  height: 8px;
  margin-right: 5px;
}

.node .icon {
  margin-right: 5px;
}

/* dotted connectors: trunk, branch */
.tree ul {
  background: repeating-linear-gradient(#888 0 1px, transparent 1px 2px) 11px 0 / 1px 100% no-repeat;
}

.tree > li:last-child > ul {
  background: none;
}

.tree ul li {
  padding-left: 41px;
  background:
    repeating-linear-gradient(#888 0 1px, transparent 1px 2px) 30px 0 / 1px 100% no-repeat,
    repeating-linear-gradient(90deg, #888 0 1px, transparent 1px 2px) 30px 8px / 10px 1px no-repeat;
}

.tree ul li:last-child {
  background-size: 1px 8px, 10px 1px;
}

.current {
  padding-right: 4px;
  background: #d9d9d9;
}

.fresh {
  width: 15px;
  height: 15px;
  margin-left: 2px;
}

.new-tag {
  margin: 0 0 6px 2px;
  background: #ffe100;
  font: 700 8px/8px "Liberation Sans", sans-serif;
}

.scroll {
  display: flex;
  flex: 0 0 15px;
  flex-direction: column;
  align-items: center;
  background: #f0f0f0;
}

.scroll svg {
  width: 10px;
  height: 17px;
}

.nav-space {
  flex: 229;
}

.thumb {
  flex: 221;
  width: 100%;
  background: #cdcdcd;
}

.thumb.tall {
  flex: 314;
}

.rest {
  flex: 215;
}

/* component list and property grid */
.content {
  display: flex;
  flex: 1;
  flex-direction: column;
  min-width: 0;
}

.subbar {
  display: flex;
  align-items: center;
  gap: 7px;
  height: 29px;
  flex: none;
  padding-left: 4px;
  background: linear-gradient(#fcfcfc, #f1f1f1);
}

.subbar .down {
  margin-left: 1px;
}

.floor {
  display: flex;
  align-items: center;
  margin-left: -3px;
}

.floor select {
  width: 50px;
  height: 22px;
  margin-left: 6px;
  padding-left: 2px;
  background: #fff;
}

.floor .down {
  margin: 0 3px 0 1px;
}

.panes {
  display: flex;
  flex: 1;
  gap: 8px;
  min-height: 0;
}

.components {
  display: flex;
  flex: 0 0 183px;
  flex-direction: column;
  padding-top: 5px;
  background: #fff;
}

.find {
  display: flex;
  gap: 5px;
  height: 25px;
  flex: none;
}

.find input {
  width: 158px;
  height: 24px;
  padding: 0 2px 3px;
  border: 1px solid #707070;
  margin-left: 1px;
}

.find input::placeholder {
  color: #777;
  opacity: 1;
}

.component-tree {
  flex: 1;
  padding-top: 1px;
}

.leaf {
  padding-left: 40px;
  background:
    repeating-linear-gradient(#888 0 1px, transparent 1px 2px) 31px 0 / 1px 8px no-repeat,
    repeating-linear-gradient(90deg, #888 0 1px, transparent 1px 2px) 31px 8px / 9px 1px no-repeat;
}

.picked {
  width: 57px;
  padding-left: 1px;
  background: #316ac5;
}

.picked .icon {
  margin-right: 6px;
}

.properties {
  display: flex;
  flex: 1;
  flex-direction: column;
  min-width: 0;
  margin-right: 3px;
  background: #fff;
}

.tabs {
  height: 21px;
  flex: none;
  border-bottom: 1px solid #d0d0d0;
}

.tab {
  height: 21px;
  padding: 0 7px 0 3px;
  border-right: 1px solid #d0d0d0;
  background: #fff;
}

.sheet {
  display: flex;
  flex: 1;
  justify-content: space-between;
  min-height: 0;
  margin: 3px 1px 4px 0;
  border: 1px solid #a0a0a0;
  padding: 1px 1px 0 0;
}

table {
  width: 337px;
  height: max-content;
  border-collapse: separate;
  border-spacing: 0;
  table-layout: fixed;
  font-family: "Liberation Serif", "Noto Sans CJK SC", serif;
  line-height: 18px;
}

th, td {
  height: 19px;
  padding: 0;
  border-right: 1px solid #c0c0c0;
  border-bottom: 1px solid #c0c0c0;
  font-weight: 400;
  white-space: nowrap;
}

thead th {
  height: 23px;
  background: linear-gradient(#fafafa, #ececec);
}

thead th:first-child {
  width: 21px;
}

thead th:nth-child(2) {
  width: 191px;
}

tbody th {
  background: #f2f2f2;
}

td:nth-child(2) {
  padding-left: 20px;
}

td:nth-child(3) {
  padding-left: 2px;
}

.hot {
  background: linear-gradient(#f9d99f, #f1c15f);
  color: #5a0030;
}

.selected th {
  background: #ffd58d;
  color: #5a0030;
}

.selected td:nth-child(2) {
  background: #0078d7;
  color: #fff;
}

.selected td:nth-child(3) {
  background: #d9ebf9;
}

.rebar td {
  color: #00f;
}

.fold td {
  color: #808080;
}

.fold td:nth-child(2) {
  padding-left: 3px;
}

.fold button {
  display: inline-block;
  width: 11px;
  height: 11px;
  margin-right: 6px;
  border: 1px solid #999;
  color: #000;
  line-height: 8px;
  vertical-align: -1px;
}

/* parameter drawing window */
.dialog {
  position: absolute;
  top: 0;
  right: 58px;
  bottom: 0;
  left: 692px;
  display: flex;
  flex-direction: column;
  padding: 0 8px 7px;
  border: 1px solid #333;
  border-bottom: 0;
  background: linear-gradient(#99b4d1, #b9cfe8 32px);
  box-shadow: inset 1px 1px #eef4fb, inset -1px 0 #45d5f5;
}

.dialog h2 {
  height: 31px;
  flex: none;
  padding-top: 11px;
}

.drawing {
  flex: 1;
  width: 100%;
  min-height: 0;
  background: #000;
  outline: 1px solid #e8e8e8;
}

.drawing text {
  fill: #fff;
  font: 300 25px "Noto Sans CJK SC", sans-serif;
}

.drawing tspan {
  font: 21px "Liberation Serif", serif;
}

.drawing text.small {
  font-size: 20px;
}

.drawing .small tspan {
  font-size: 18px;
}

.drawing text.cyan {
  fill: #0ff;
  font: 24px "Liberation Serif", serif;
}

.drawing text.big {
  font-size: 42px;
}

.line, .steel, .mark, .focus {
  fill: none;
  stroke: #fff;
  shape-rendering: crispEdges;
}

.steel {
  stroke: #f00;
  stroke-width: 2;
}

.thin {
  stroke-width: 1;
}

.mark {
  stroke: #0ff;
  stroke-width: 3;
}

.focus {
  stroke: #00f;
  stroke-width: 3;
}

.side {
  fill: #0f0;
}

.flat {
  fill: #f0f;
}

/* status bar */
.status {
  display: flex;
  gap: 2px;
  height: 22px;
  flex: none;
  padding-top: 2px;
  background: #fff;
  font-family: "Liberation Serif", "Noto Sans CJK SC", serif;
}

.status span {
  padding-left: 1px;
  border: 1px solid #d8d8d8;
  border-bottom: 0;
  background: linear-gradient(#fcfcfc, #f0f0f0);
  line-height: 18px;
  white-space: nowrap;
}

.s1 { flex: 0 0 148px; }
.s2 { flex: 0 0 79px; }
.s3 { flex: 0 0 98px; }
.s4 { flex: 0 0 48px; }
.s5 { flex: 1; }
.s6 { flex: 0 0 70px; }

/* windows taskbar */
.taskbar {
  display: flex;
  height: 40px;
  flex: none;
  background: #000b0d;
  color: #fff;
}

.start {
  justify-content: center;
  width: 48px;
  background: #000;
}

.start svg {
  width: 16px;
  height: 16px;
}

.cortana {
  display: flex;
  align-items: center;
  flex: 0 0 344px;
  padding: 0 14px 0 9px;
  background: #333;
}

.circle {
  width: 22px;
  height: 22px;
}

.cortana input {
  flex: 1;
  min-width: 0;
  margin-left: 5px;
  font-size: 14px;
}

.cortana input::placeholder {
  color: #999;
  opacity: 1;
}

.mic {
  width: 12px;
  height: 16px;
}

.apps {
  display: flex;
  gap: 1px;
  padding-left: 2px;
}

.apps button {
  justify-content: center;
  width: 48px;
}

.apps svg {
  width: 24px;
  height: 24px;
}

.apps .after {
  margin-left: 5px;
}

.run {
  background: linear-gradient(#76b9ed, #76b9ed) center bottom / 40px 2px no-repeat;
}

.run.active {
  background: linear-gradient(#76b9ed, #76b9ed) center bottom / 48px 2px no-repeat #333c3e;
}

.tray {
  display: flex;
  align-items: center;
  gap: 8px;
  margin-left: auto;
  padding-right: 4px;
}

.tray svg {
  width: 16px;
  height: 16px;
  fill: none;
  stroke: #fff;
}

.tray svg use {
  stroke: none;
}

.tray b {
  font-size: 14px;
  font-weight: 500;
}

.tray time {
  margin: 0 0 0 13px;
  line-height: 19px;
  text-align: center;
}

.notice {
  position: relative;
  width: 52px;
  height: 40px;
  padding-left: 15px;
  border-right: 1px solid #555;
}

.notice span {
  position: absolute;
  top: 18px;
  left: 22px;
  width: 17px;
  height: 17px;
  border: 1px solid #888;
  border-radius: 50%;
  background: #333;
  font-size: 11px;
  font-weight: 700;
  line-height: 15px;
  text-align: center;
}
```
